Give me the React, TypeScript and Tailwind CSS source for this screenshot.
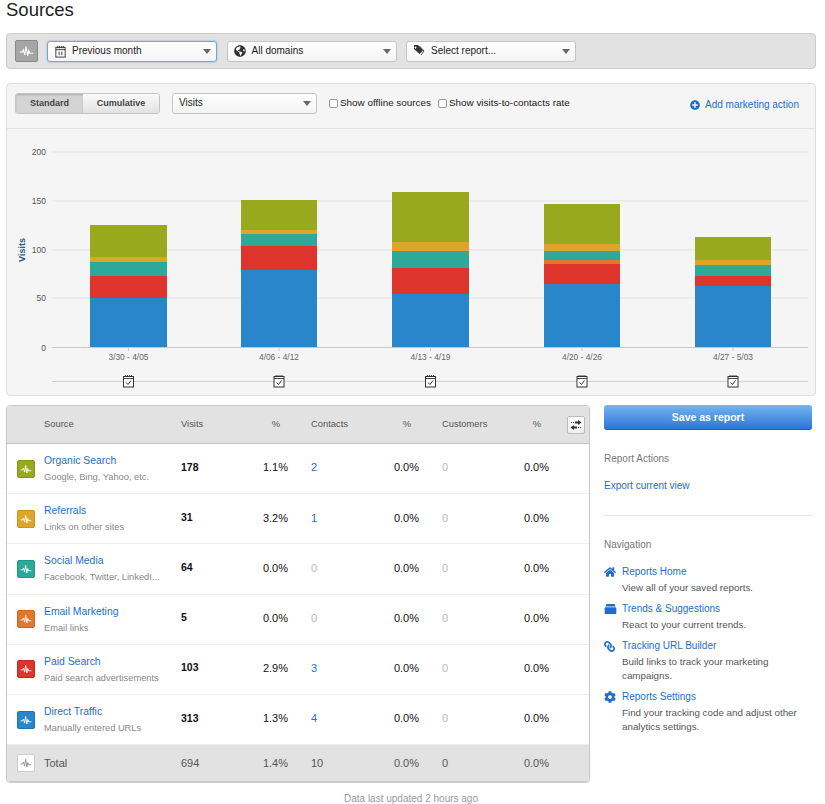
import React from "react";
import { FaCog, FaGlobeAmericas, FaHome, FaLink, FaPlusCircle } from "react-icons/fa";

const Pulse = ({ color = "#fff" }: { color?: string }) => (
  <svg viewBox="0 0 18 18" className="w-full h-full">
    <path d="M3 10h2l1.2-2 1.2 4.5 1.2-7.5 1.4 8.5 1-5 1 2.5h3" fill="none" stroke={color} strokeWidth="1" />
  </svg>
);

const Select = ({ label, icon, width, focus }: { label: string; icon?: React.ReactNode; width: string; focus?: boolean }) => (
  <div
    className={`${width} h-[21px] flex items-center rounded-[3px] border bg-gradient-to-b from-white to-[#f4f4f4] text-[10px] text-[#222] ${
      focus ? "border-[#6fa8dc] shadow-[0_0_2px_#6fa8dc]" : "border-[#c4c4c4]"
    }`}
  >
    {icon && <span className="w-[24px] pl-[6px] flex items-center shrink-0 text-[#333]">{icon}</span>}
    <span className={`pb-[2px] ${icon ? "" : "pl-[6px]"}`}>{label}</span>
    <span className="ml-auto mr-[5px] w-0 h-0 border-x-[4px] border-x-transparent border-t-[5px] border-t-[#666]" />
  </div>
);

const CalendarIcon = () => (
  <svg viewBox="0 0 14 14" className="w-[13px] h-[13px]">
    <rect x="2" y="2.5" width="10" height="10.5" fill="#fff" stroke="#333" />
    <path d="M2 5h10M4 1v2.5M6 1v2.5M8 1v2.5M10 1v2.5" stroke="#333" />
    <path d="M5.5 7v4M8.5 7v4" stroke="#333" />
  </svg>
);

const TagIcon = () => (
  <svg viewBox="0 0 12 12" className="w-[12px] h-[12px]">
    <path
      fillRule="evenodd"
      d="M1 0h4l5 5.5-3.5 3.5L1 4zM2.5 1.5a1 1 0 1 0 .01 0z"
      fill="#333"
    />
    <path d="M6.5 1l4.5 5-3 4" fill="none" stroke="#333" strokeWidth="0.9" />
  </svg>
);

const SwapIcon = () => (
  <svg viewBox="0 0 12 10" className="w-[12px] h-[10px]" fill="#333">
    <path d="M5 1.5h3V0l3.5 2.5L8 5V3.5H5zM1 2h1v1H1zM3 2h1v1H3z" />
    <path d="M7 6.5H4V5L.5 7.5 4 10V8.500h3zM8 7h1v1H8zM10 7h1v1h-1z" />
  </svg>
);

const Check = ({ label }: { label: string }) => (
  <label className="flex items-center gap-[2px] text-[9.9px] text-[#222]">
    <span className="w-[9px] h-[9px] rounded-[2px] border border-[#999] bg-white" />
    {label}
  </label>
);

const colors = { olive: "#98a91d", yellow: "#dfa52a", teal: "#2ca998", orange: "#e27730", red: "#dd342c", blue: "#2a86cb" };

// each bar is a list of [top y, bottom y, colour], in page coordinates
const bars: { x: number; w: number; label: string; segs: [number, number, string][] }[] = [
  { x: 90, w: 77, label: "3/30 - 4/05", segs: [[225, 257, colors.olive], [257, 262, colors.yellow], [262, 276, colors.teal], [276, 298, colors.red], [298, 347, colors.blue]] },
  { x: 241, w: 76, label: "4/06 - 4/12", segs: [[200, 230, colors.olive], [230, 234, colors.yellow], [234, 246, colors.teal], [246, 270, colors.red], [270, 347, colors.blue]] },
  { x: 392, w: 77, label: "4/13 - 4/19", segs: [[192, 242, colors.olive], [242, 251, colors.yellow], [251, 268, colors.teal], [268, 294, colors.red], [294, 347, colors.blue]] },
  { x: 544, w: 76, label: "4/20 - 4/26", segs: [[204, 244, colors.olive], [244, 251, colors.yellow], [251, 260, colors.teal], [260, 264, colors.orange], [264, 284, colors.red], [284, 347, colors.blue]] },
  { x: 695, w: 76, label: "4/27 - 5/03", segs: [[237, 260, colors.olive], [260, 265, colors.yellow], [265, 276, colors.teal], [276, 286, colors.red], [286, 347, colors.blue]] },
];

const Chart = () => (
  <svg viewBox="7 129 808 266" className="block w-[808px] h-[266px]" fontFamily="'Liberation Sans', sans-serif">
    {[[200, 152], [150, 201], [100, 250], [50, 298]].map(([v, y]) => (
      <g key={v}>
        <line x1="52" x2="808" y1={y} y2={y} stroke="#e3e3e3" strokeWidth="1.2" />
        <text x="46" y={y + 3} textAnchor="end" fontSize="8.6" fill="#555">{v}</text>
      </g>
    ))}
    <text x="46" y="351" textAnchor="end" fontSize="8.6" fill="#555">0</text>
    <text transform="translate(25 250) rotate(-90)" textAnchor="middle" fontSize="9" fontWeight="bold" fill="#2a5a90">Visits</text>
    {bars.map((b) => (
      <g key={b.label}>
        {b.segs.map(([t, e, c]) => (
          <rect key={t} x={b.x} y={t} width={b.w} height={e - t} fill={c} />
        ))}
        <text x={b.x + b.w / 2} y="360" textAnchor="middle" fontSize="8.4" fill="#666">{b.label}</text>
        <line x1={b.x + b.w / 2} x2={b.x + b.w / 2} y1="347" y2="351" stroke="#ccc" />
      </g>
    ))}
    <line x1="52" x2="808" y1="347.5" y2="347.5" stroke="#c8c8c8" />
    <line x1="52" x2="808" y1="381.5" y2="381.5" stroke="#d0d0d0" />
    {bars.map((b) => (
      <g key={b.label} transform={`translate(${b.x + b.w / 2 - 5} 375)`}>
        <rect x="0" y="1.5" width="10" height="10.5" fill="#fff" stroke="#333" />
        <path d="M0 3.5h10M2 0v2M4 0v2M6 0v2M8 0v2" stroke="#333" strokeWidth="0.9" />
        <path d="M2.5 7.5l2 2 3-4" fill="none" stroke="#333" />
      </g>
    ))}
  </svg>
);

const rows = [
  { name: "Organic Search", sub: "Google, Bing, Yahoo, etc.", visits: "178", pct: "1.1%", contacts: "2", bg: "bg-[#98a91d] border-[#86961a]" },
  { name: "Referrals", sub: "Links on other sites", visits: "31", pct: "3.2%", contacts: "1", bg: "bg-[#dfa52a] border-[#c99320]" },
  { name: "Social Media", sub: "Facebook, Twitter, LinkedI...", visits: "64", pct: "0.0%", contacts: "0", bg: "bg-[#2ca998] border-[#229686]" },
  { name: "Email Marketing", sub: "Email links", visits: "5", pct: "0.0%", contacts: "0", bg: "bg-[#e27730] border-[#cc6622]" },
  { name: "Paid Search", sub: "Paid search advertisements", visits: "103", pct: "2.9%", contacts: "3", bg: "bg-[#dd342c] border-[#c52820]" },
  { name: "Direct Traffic", sub: "Manually entered URLs", visits: "313", pct: "1.3%", contacts: "4", bg: "bg-[#2a86cb] border-[#2074b4]" },
];

const gridCols = "grid grid-cols-[37px_137px_70px_37px_93px_38px_93px_37px_1fr] items-center";

const SourcesTable = () => (
  <div className="w-[584px] rounded-[4px] border border-[#c8c8c8] shadow-[0_1px_1px_#ccc] overflow-hidden">
    <div className={`${gridCols} h-[38px] bg-[#e2e2e2] border-b border-[#c4c4c4] text-[9.4px] text-[#555]`}>
      <span />
      <span>Source</span>
      <span>Visits</span>
      <span className="text-right pr-2">%</span>
      <span className="pl-[23px]">Contacts</span>
      <span className="text-right pr-2">%</span>
      <span className="pl-[23px]">Customers</span>
      <span className="text-right pr-2">%</span>
      <span className="ml-auto mr-[4px] w-[18px] h-[18px] rounded-[2px] border border-[#bbb] bg-gradient-to-b from-white to-[#eee] flex items-center justify-center">
        <SwapIcon />
      </span>
    </div>
    {rows.map((r) => (
      <div key={r.name} className={`${gridCols} h-[50.2px] border-b border-[#eee] last:border-b-0 bg-white text-[11px] text-[#111]`}>
        <span className={`ml-[10px] w-[18px] h-[18px] rounded-[2px] border ${r.bg}`}>
          <Pulse />
        </span>
        <div className="pt-[1px]">
          <div className="text-[10.4px] text-[#1a6fd0] leading-[14px]">{r.name}</div>
          <div className="text-[9.3px] text-[#888] leading-[13px] mt-[3px]">{r.sub}</div>
        </div>
        <span className="pb-[2px] font-bold text-[10.5px]">{r.visits}</span>
        <span className="pb-[2px] text-right">{r.pct}</span>
        <span className={`pb-[2px] pl-[23px] ${r.contacts === "0" ? "text-[#bbb]" : "text-[#1a6fd0]"}`}>{r.contacts}</span>
        <span className="pb-[2px] text-right">0.0%</span>
        <span className="pb-[2px] pl-[23px] text-[#bbb]">0</span>
        <span className="pb-[2px] text-right">0.0%</span>
        <span />
      </div>
    ))}
    <div className={`${gridCols} h-[36px] bg-[#e2e2e2] text-[11px] text-[#555]`}>
      <span className="ml-[10px] w-[18px] h-[18px] rounded-[2px] bg-white border border-[#ccc]">
        <Pulse color="#888" />
      </span>
      <span>Total</span>
      <span>694</span>
      <span className="text-right">1.4%</span>
      <span className="pl-[23px]">10</span>
      <span className="text-right">0.0%</span>
      <span className="pl-[23px]">0</span>
      <span className="text-right">0.0%</span>
      <span />
    </div>
  </div>
);

const navItems = [
  { title: "Reports Home", desc: "View all of your saved reports.", icon: <FaHome size={12} /> },
  {
    title: "Trends & Suggestions",
    desc: "React to your current trends.",
    icon: (
      <svg viewBox="0 0 14 12" className="w-[13px] h-[10px]" fill="currentColor">
        <path d="M2 0h10l1 3H1z" />
        <rect y="4" width="14" height="8" rx="1" />
      </svg>
    ),
  },
  { title: "Tracking URL Builder", desc: "Build links to track your marketing campaigns.", icon: <FaLink size={11} className="-scale-x-100" /> },
  { title: "Reports Settings", desc: "Find your tracking code and adjust other analytics settings.", icon: <FaCog size={12} /> },
];

const Sidebar = () => (
  <div className="w-[208px] ml-[14px]">
    <div className="h-[25px] pt-[2px] rounded-[3px] bg-gradient-to-b from-[#74b6ef] to-[#2e73d8] border-b border-[#1f5fb8] flex items-center justify-center text-[10.5px] font-bold text-white">
      Save as report
    </div>
    <div className="mt-[23px] text-[10px] text-[#777] leading-[12px]">Report Actions</div>
    <div className="mt-[15px] text-[10px] text-[#1a6fd0] leading-[12px]">Export current view</div>
    <div className="mt-[23px] border-t border-[#e8e8e8]" />
    <div className="mt-[23px] text-[10px] text-[#777] leading-[12px]">Navigation</div>
    <div className="mt-[14px] flex flex-col gap-[7px]">
      {navItems.map((n) => (
        <div key={n.title} className="flex">
          <span className="w-[18px] h-[14px] shrink-0 flex items-center text-[#1f6fc8]">{n.icon}</span>
          <div>
            <div className="text-[10px] text-[#1a6fd0] leading-[14px]">{n.title}</div>
            <div className="mt-[2px] text-[9.8px] text-[#555] leading-[14px]">{n.desc}</div>
          </div>
        </div>
      ))}
    </div>
  </div>
);

export default function App() {
  return (
    <div className="w-[825px] h-[804px] overflow-hidden bg-white px-[6px] font-['Liberation_Sans',sans-serif]">
      <h1 className="text-[18.5px] leading-[20px] text-[#222]">Sources</h1>

      <div className="mt-[13px] w-[810px] h-[36px] rounded-[4px] border border-[#ccc] bg-[#e2e2e2] flex items-center pl-[8px]">
        <span className="w-[23px] h-[22px] rounded-[2px] bg-[#a5a5a5] border border-[#888]">
          <Pulse />
        </span>
        <div className="ml-[9px] flex gap-[9.5px]">
          <Select width="w-[170px]" label="Previous month" icon={<CalendarIcon />} focus />
          <Select width="w-[170px]" label="All domains" icon={<FaGlobeAmericas size={12} />} />
          <Select width="w-[170px]" label="Select report..." icon={<TagIcon />} />
        </div>
      </div>

      <div className="mt-[14px] w-[810px] rounded-[4px] border border-[#ddd] bg-[#f5f5f5]">
        <div className="h-[45px] border-b border-[#e2e2e2] flex items-start pt-[9px] pl-[8px] pr-[16px]">
          <div className="flex h-[21px] rounded-[3px] border border-[#c4c4c4] text-[9px] font-bold text-[#444] overflow-hidden">
            <span className="w-[67px] bg-[#d4d4d4] flex items-center justify-center shadow-[inset_0_1px_2px_#aaa]">Standard</span>
            <span className="w-[76px] bg-gradient-to-b from-[#fafafa] to-[#e2e2e2] flex items-center justify-center">Cumulative</span>
          </div>
          <div className="ml-[12px]">
            <Select width="w-[145px]" label="Visits" />
          </div>
          <div className="ml-[12px] h-[21px] flex gap-[7px] pb-[1px]">
            <Check label="Show offline sources" />
            <Check label="Show visits-to-contacts rate" />
          </div>
          <div className="ml-auto h-[21px] mt-[1px] flex items-center gap-[5px] text-[10px] text-[#1a6fd0]">
            <FaPlusCircle size={10} />
            Add marketing action
          </div>
        </div>
        <Chart />
      </div>

      <div className="mt-[9px] flex items-start">
        <SourcesTable />
        <Sidebar />
      </div>

      <div className="mt-[11px] w-[810px] text-center text-[10px] leading-[12px] text-[#999]">Data last updated 2 hours ago</div>
    </div>
  );
}
